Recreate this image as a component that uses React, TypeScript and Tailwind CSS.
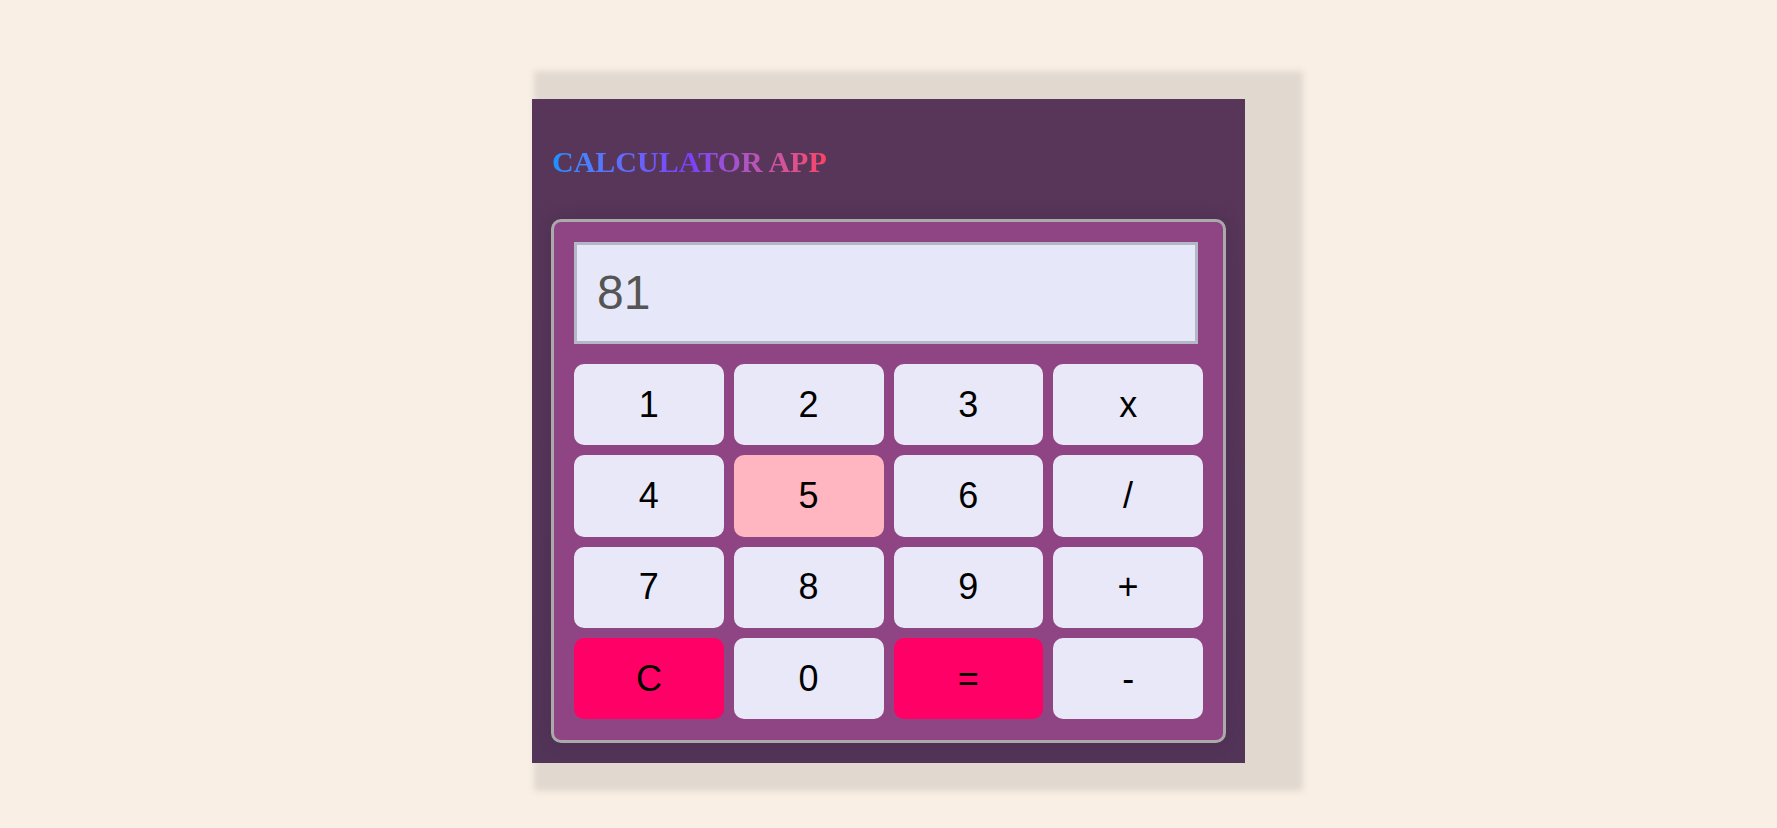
const keys = [
  { label: "1" },
  { label: "2" },
  { label: "3" },
  { label: "x" },
  { label: "4" },
  { label: "5", tone: "pink" },
  { label: "6" },
  { label: "/" },
  { label: "7" },
  { label: "8" },
  { label: "9" },
  { label: "+" },
  { label: "C", tone: "hot" },
  { label: "0" },
  { label: "=", tone: "hot" },
  { label: "-" },
];

const Key = ({ label, tone }: { label: string; tone?: string }) => {
  const bg =
    tone === "hot"
      ? "bg-[#ff0066]"
      : tone === "pink"
      ? "bg-[#ffb6c1]"
      : "bg-[#e9e8f8]";
  return (
    <button
      className={`${bg} h-[81.3px] rounded-[10px] text-[36px] text-black font-['Liberation_Sans',Arial,sans-serif] flex items-center justify-center`}
    >
      {label}
    </button>
  );
};

const App = () => {
  return (
    <div className="min-h-screen w-full bg-[#f9efe5] flex justify-center items-start pt-[99px] pb-[40px]">
      <div className="w-[713px] bg-gradient-to-b from-[#583659] to-[#533459] shadow-[30px_0_6px_28px_#e1d9cf] px-[19px] pt-[48px] pb-[20px]">
        <h1 className="text-[30px] leading-[30px] font-bold font-['Liberation_Serif','Times_New_Roman',serif] pl-px mb-[42px]">
          <span className="bg-gradient-to-r from-[#1a90ff] via-[#7a3ff8] to-[#ff4062] bg-clip-text text-transparent">
            CALCULATOR APP
          </span>
        </h1>
        <div className="bg-[#8f4483] border-[3px] border-[#aaaaaa] rounded-[10px] px-5 pt-5 pb-[21px] shadow-[0_0_18px_rgba(0,0,0,0.12)]">
          <div className="w-[624px] h-[102px] bg-[#e6e8f9] border-[3px] border-[#b3b7c6] flex items-center pl-[20px] mb-5 text-[48px] text-[#555555] font-['Liberation_Sans',Arial,sans-serif]">
            81
          </div>
          <div className="grid grid-cols-4 gap-x-[10px] gap-y-[10px]">
            {keys.map((k) => (
              <Key key={k.label} label={k.label} tone={k.tone} />
            ))}
          </div>
        </div>
      </div>
    </div>
  );
};

export default App;
